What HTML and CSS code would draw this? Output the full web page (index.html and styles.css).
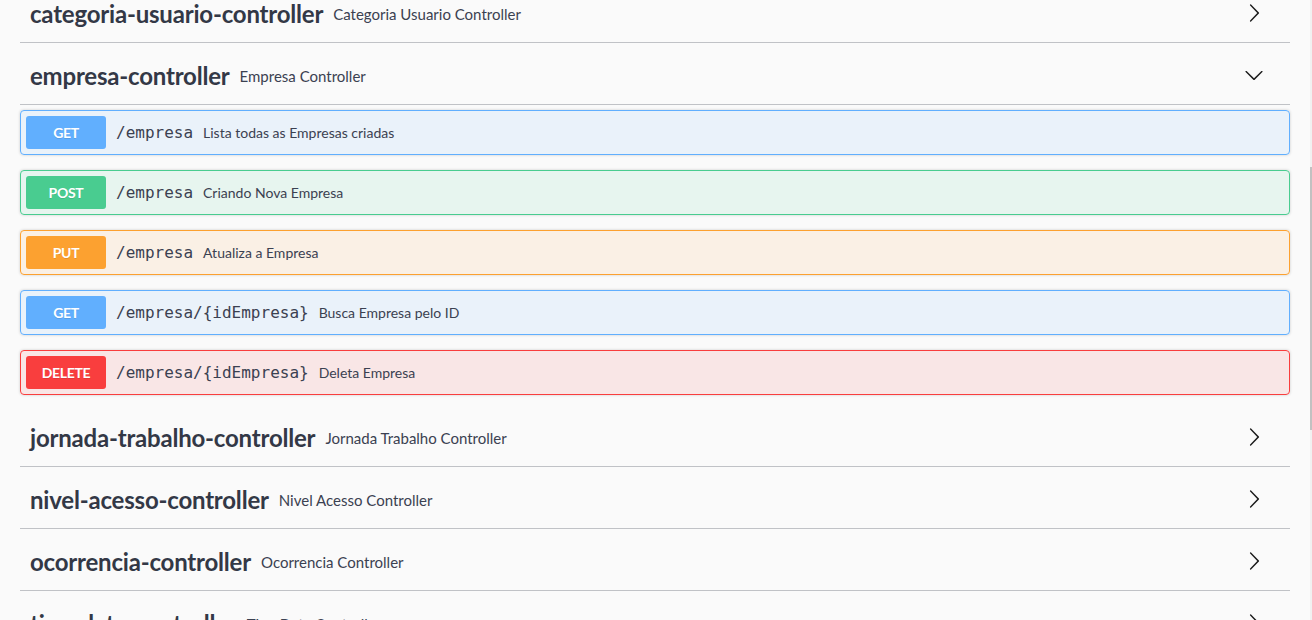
FILE: index.html
```html
<!DOCTYPE html>
<html lang="pt">
<head>
<meta charset="utf-8">
<title>Swagger UI</title>
<link rel="stylesheet" href="styles.css">
</head>
<body>
<div class="scroll-track"><div class="scroll-thumb"></div></div>
<div class="wrapper">
  <section class="tag-section">
    <h4 class="tag">
      <span class="tag-name">categoria-usuario-controller</span>
      <small class="tag-desc">Categoria Usuario Controller</small>
      <button class="expand" aria-label="expand"><svg width="20" height="20" viewBox="0 0 20 20"><path d="M13.25 10L6.109 2.58a.697.697 0 0 1 0-.979.68.68 0 0 1 .969 0l7.83 7.908a.697.697 0 0 1 0 .979l-7.83 7.908a.68.68 0 0 1-.969 0 .697.697 0 0 1 0-.979L13.25 10z"/></svg></button>
    </h4>
  </section>

  <section class="tag-section">
    <h4 class="tag">
      <span class="tag-name">empresa-controller</span>
      <small class="tag-desc">Empresa Controller</small>
      <button class="expand" aria-label="collapse"><svg width="20" height="20" viewBox="0 0 20 20"><path d="M17.418 6.109c.272-.268.709-.268.979 0s.271.701 0 .969l-7.908 7.83c-.27.268-.707.268-.979 0l-7.908-7.83c-.27-.268-.27-.701 0-.969.271-.268.709-.268.979 0L10 13.25l7.418-7.141z"/></svg></button>
    </h4>
    <div class="ops">
      <div class="op op-get"><div class="summary"><span class="method">GET</span><span class="path">/empresa</span><span class="desc">Lista todas as Empresas criadas</span></div></div>
      <div class="op op-post"><div class="summary"><span class="method">POST</span><span class="path">/empresa</span><span class="desc">Criando Nova Empresa</span></div></div>
      <div class="op op-put"><div class="summary"><span class="method">PUT</span><span class="path">/empresa</span><span class="desc">Atualiza a Empresa</span></div></div>
      <div class="op op-get"><div class="summary"><span class="method">GET</span><span class="path">/empresa/{idEmpresa}</span><span class="desc">Busca Empresa pelo ID</span></div></div>
      <div class="op op-delete"><div class="summary"><span class="method">DELETE</span><span class="path">/empresa/{idEmpresa}</span><span class="desc">Deleta Empresa</span></div></div>
    </div>
  </section>

  <section class="tag-section">
    <h4 class="tag">
      <span class="tag-name">jornada-trabalho-controller</span>
      <small class="tag-desc">Jornada Trabalho Controller</small>
      <button class="expand" aria-label="expand"><svg width="20" height="20" viewBox="0 0 20 20"><path d="M13.25 10L6.109 2.58a.697.697 0 0 1 0-.979.68.68 0 0 1 .969 0l7.83 7.908a.697.697 0 0 1 0 .979l-7.83 7.908a.68.68 0 0 1-.969 0 .697.697 0 0 1 0-.979L13.25 10z"/></svg></button>
    </h4>
  </section>

  <section class="tag-section">
    <h4 class="tag">
      <span class="tag-name">nivel-acesso-controller</span>
      <small class="tag-desc">Nivel Acesso Controller</small>
      <button class="expand" aria-label="expand"><svg width="20" height="20" viewBox="0 0 20 20"><path d="M13.25 10L6.109 2.58a.697.697 0 0 1 0-.979.68.68 0 0 1 .969 0l7.83 7.908a.697.697 0 0 1 0 .979l-7.830 7.908a.68.68 0 0 1-.969 0 .697.697 0 0 1 0-.979L13.25 10z"/></svg></button>
    </h4>
  </section>

  <section class="tag-section">
    <h4 class="tag">
      <span class="tag-name">ocorrencia-controller</span>
      <small class="tag-desc">Ocorrencia Controller</small>
      <button class="expand" aria-label="expand"><svg width="20" height="20" viewBox="0 0 20 20"><path d="M13.25 10L6.109 2.58a.697.697 0 0 1 0-.979.68.68 0 0 1 .969 0l7.83 7.908a.697.697 0 0 1 0 .979l-7.83 7.908a.68.68 0 0 1-.969 0 .697.697 0 0 1 0-.979L13.25 10z"/></svg></button>
    </h4>
  </section>

  <section class="tag-section">
    <h4 class="tag">
      <span class="tag-name">tipo-data-controller</span>
      <small class="tag-desc">Tipo Data Controller</small>
      <button class="expand" aria-label="expand"><svg width="20" height="20" viewBox="0 0 20 20"><path d="M13.25 10L6.109 2.58a.697.697 0 0 1 0-.979.68.68 0 0 1 .969 0l7.83 7.908a.697.697 0 0 1 0 .979l-7.83 7.908a.68.68 0 0 1-.969 0 .697.697 0 0 1 0-.979L13.25 10z"/></svg></button>
    </h4>
  </section>
</div>
</body>
</html>
```

FILE: styles.css
```css
html, body {
  margin: 0;
  padding: 0;
}

body {
  background: #fafafa;
  color: #3b4151;
  font-family: Lato, "Open Sans", sans-serif;
  overflow: hidden;
}

.wrapper {
  max-width: 1270px;
  padding: 0 20px;
  margin-top: -14px;
}

.tag-section {
  display: flex;
  flex-direction: column;
}

.tag {
  display: flex;
  align-items: center;
  margin: 0 0 5px;
  padding: 10px 20px 10px 10px;
  border-bottom: 1px solid rgba(59, 65, 81, 0.3);
  font-weight: 400;
}

.tag-name {
  font-size: 24px;
  font-weight: 700;
  line-height: 36px;
  letter-spacing: -0.2px;
  color: #333846;
}

.tag-desc {
  flex: 1;
  padding: 0 10px;
  font-size: 15px;
  font-weight: 400;
  color: #3b4151;
}

.expand {
  display: flex;
  border: none;
  background: none;
  padding: 0;
  margin: -3px 6px 0 0;
  cursor: pointer;
}

.expand svg {
  fill: #1b1b1b;
}

.ops {
  display: flex;
  flex-direction: column;
  gap: 15px;
  padding-bottom: 15px;
}

.op {
  border: 1px solid;
  border-radius: 4px;
  box-shadow: 0 0 3px rgba(0, 0, 0, 0.19);
}

.summary {
  display: flex;
  align-items: center;
  padding: 5px;
}

.method {
  min-width: 80px;
  height: 33px;
  display: flex;
  align-items: center;
  justify-content: center;
  border-radius: 3px;
  color: #fff;
  font-size: 14px;
  font-weight: 700;
  letter-spacing: -0.3px;
  text-shadow: 0 1px 0 rgba(0, 0, 0, 0.1);
}

.path {
  padding: 0 10px;
  font-family: "DejaVu Sans Mono", "Liberation Mono", monospace;
  font-size: 16px;
  color: #3b4151;
}

.desc {
  font-size: 14px;
  color: #3b4151;
}

.op-get {
  background: rgba(97, 175, 254, 0.1);
  border-color: #61affe;
}
.op-get .method { background: #61affe; }

.op-post {
  background: rgba(73, 204, 144, 0.1);
  border-color: #49cc90;
}
.op-post .method { background: #49cc90; }

.op-put {
  background: rgba(252, 161, 48, 0.1);
  border-color: #fca130;
}
.op-put .method { background: #fca130; }

.op-delete {
  background: rgba(249, 62, 62, 0.1);
  border-color: #f93e3e;
}
.op-delete .method { background: #f93e3e; }

.scroll-track {
  position: fixed;
  top: 0;
  right: 0;
  width: 2px;
  height: 100%;
  background: #f1f1f1;
}

.scroll-thumb {
  margin-top: 167px;
  height: 263px;
  background: #c1c1c1;
}
```
